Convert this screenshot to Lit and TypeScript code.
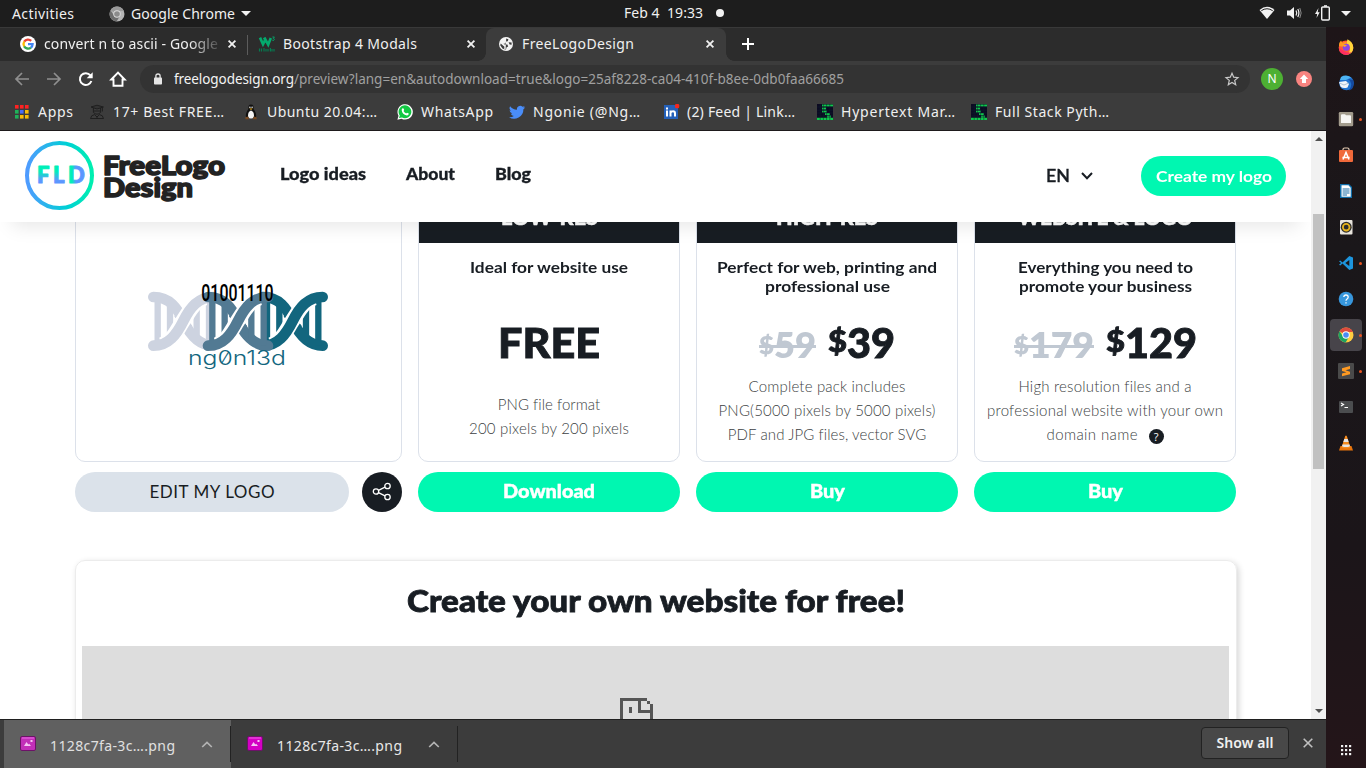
import { LitElement, html, svg, css, nothing } from "lit";
import { customElement, property, query } from "lit/decorators.js";
import { styleMap } from "lit/directives/style-map.js";

/* One line of text that fills the given width, by tracking or by widening its glyphs. */
@customElement("fit-text")
class FitText extends LitElement {
  @property({ type: Number }) w = 0;
  @property() text = "";
  @property({ type: Boolean }) wide = false;
  @query("span") span!: HTMLElement;
  static styles = css`
    :host { display: inline-block; white-space: pre; }
    span { display: inline-block; transform-origin: 0 50%; }
  `;
  updated() {
    const s = this.span;
    s.style.letterSpacing = "0px";
    s.style.transform = "none";
    const natural = s.getBoundingClientRect().width;
    if (this.wide) {
      s.style.transform = `scaleX(${this.w / natural})`;
      s.style.marginRight = this.w - natural + "px";
      return;
    }
    const n = Math.max(1, this.text.length - 1);
    const gap = (this.w - natural) / n;
    s.style.letterSpacing = gap + "px";
    s.style.marginRight = -gap + "px";
  }
  render() {
    return html`<span>${this.text}</span>`;
  }
}

const t = (text: string, w: number, cls = "") =>
  html`<fit-text class=${cls} .text=${text} .w=${w}></fit-text>`;
const wide = (text: string, w: number, cls = "") =>
  html`<fit-text class=${cls} .text=${text} .w=${w} .wide=${true}></fit-text>`;

const icon = (w: number, h: number, body: unknown, vb = `0 0 ${w} ${h}`) =>
  html`<svg class="ic" width=${w} height=${h} viewBox=${vb} fill="none">${body}</svg>`;

const closeX = icon(8, 8, svg`<path d="M.6.6l6.8 6.8M7.4.6L.6 7.4" stroke="#f0f0f0" stroke-width="1.8"/>`);

const chromeBall = (r: string, g: string, y: string, b: string, ring: string) => svg`
  <circle cx="8" cy="8" r="7.5" fill=${y}/>
  <path d="M8 8L1.5 4.25A7.5 7.5 0 0 1 14.5 4.25L15 5H8z" fill=${r}/>
  <path d="M1.5 4.25A7.5 7.5 0 0 0 7.6 15.5L11 9.7 8 8 4.9 9.2z" fill=${g}/>
  <circle cx="8" cy="8" r="3.7" fill=${ring}/><circle cx="8" cy="8" r="2.8" fill=${b}/>`;

const googleG = icon(16, 16, svg`<circle cx="8" cy="8" r="8" fill="#fff"/>
  <g stroke-width="2.3"><path d="M4.2 5.6A4.6 4.6 0 0 1 11.2 4.8" stroke="#ea4335"/>
  <path d="M4.2 10.4A4.7 4.7 0 0 1 4.2 5.6" stroke="#fbbc05"/>
  <path d="M11 11.6A4.7 4.7 0 0 1 4.1 10.3" stroke="#34a853"/>
  <path d="M8 8.2H12.6A4.7 4.7 0 0 1 10.9 11.6" stroke="#4285f4"/></g>`);

const w3 = icon(16, 16, svg`<path d="M1 1.600L4 8.200 6.400 3.600 9.200 8.600 11.800 2M5 1.600L7.600 6" stroke="#04aa6d" stroke-width="2.600"/>
  <path d="M13.400 1H15.400L14.300 2.400Q15.600 2.600 15.200 3.800T13.300 4.200" stroke="#04aa6d" stroke-width=".9"/>
  <path d="M.5 12.500v3M2.500 12.500v3M5 12v3.500M7 13v2.500M9 13v2.500M11.400 12v3.500M13 13v2.500M15 13v2.500" stroke="#067a50" stroke-width="1.200"/>`);

const globe = icon(16, 16, svg`<circle cx="8" cy="8" r="7" fill="#f3f3f3"/>
  <path d="M8.200 2.400L10.400 3.200 9.800 5.200 8 5.600 7.600 7.400 5.400 7.800 6.600 8.600H9.400L10.200 10.400 8.600 11.200 8 13.600 6.200 13 6.400 10.800 2.700 7.600 2.200 9.200 4.400 12.400 7.600 13.800zM10.600 6.200L13.600 6.400 13.600 8.800 11.600 8.400z" fill="#3c3c3c"/>`);

const apps = icon(16, 16, svg`${[["#f22", "#f22", "#f22"], ["#1fb25a", "#4a6cf5", "#fbbc05"], ["#1fb25a", "#fbbc05", "#fbbc05"]].map(
  (row, j) => row.map((c, i) => svg`<rect x=${1 + i * 5} y=${1 + j * 5} width="3.6" height="3.6" fill=${c}/>`))}`);

const graduate = icon(16, 16, svg`<g stroke="#1c1c1c" stroke-width=".9"><path d="M2 3L8 1.200 14.400 3 8 5z" fill="#333"/><path d="M4.400 4v4.400Q8 12 11.600 8.400V4M13.400 3.500v4M1.500 14.500Q2 11 5.500 10.600L8 13l2.500-2.400Q14 11 14.500 14.500zM5 7h6M8 12v2.500"/></g>`);

const tux = icon(16, 16, svg`<path d="M8 .6C5.400.6 5.300 3 5.400 5 4 7 2.800 9 2.800 12 3 15.400 13 15.400 13.200 12 13.200 9 12 7 10.600 5 10.700 3 10.600.6 8 .6z" fill="#111"/>
  <path d="M8 6.500C6 7 5 9 5 11.500Q5 14.600 8 14.600T11 11.500C11 9 10 7 8 6.500z" fill="#f4f4f4"/>
  <circle cx="6.900" cy="3.300" r=".7" fill="#fff"/><circle cx="9.100" cy="3.300" r=".7" fill="#fff"/><path d="M6.400 4.600H9.600L8 6z" fill="#f4b21c"/>
  <path d="M2.400 13.200L5 12.500 6.200 15.300 2.400 15.200zM13.600 13.200L11 12.500 9.800 15.300 13.600 15.200z" fill="#7a4a22"/>`);

const whatsapp = icon(16, 16, svg`<path d="M.4 15.700L1.500 11.800A7.700 7.700 0 1 1 4.500 14.700z" fill="#fff"/>
  <path d="M2 14.100L2.800 11.500A6.400 6.400 0 1 1 5 13.400z" fill="#12c843"/>
  <path d="M5.500 4.200L6.600 4.400 7.200 6 6.500 7Q7.500 8.800 9.200 9.500L10 8.700 11.800 9.500Q11.700 11.500 9.800 11.400 5.300 10.500 4.700 6.200 4.600 4.800 5.500 4.200z" fill="#fff"/>`);

const twitter = icon(16, 16, svg`<path d="M16 3.200a6 6 0 0 1-1.800.5A3.300 3.300 0 0 0 15.600 2a6.500 6.500 0 0 1-2.100.8 3.300 3.300 0 0 0-5.600 3A9.300 9.300 0 0 1 1.100 2.300a3.300 3.300 0 0 0 1 4.400 3 3 0 0 1-1.500-.4 3.300 3.300 0 0 0 2.600 3.200 3.300 3.300 0 0 1-1.500.1 3.300 3.300 0 0 0 3.100 2.300A6.600 6.600 0 0 1 0 13.200 9.300 9.300 0 0 0 14.400 5.300 6.500 6.500 0 0 0 16 3.200z" fill="#4a8df8"/>`);

const linkedin = icon(18, 16, svg`<rect x="1" y="1" width="14" height="14" fill="#2460b8"/>
  <path d="M4 6.500V12.500M4 3.500v2M7.500 12.500V6.500M7.500 9Q8 7.200 10 7.200 12 7.200 12 9.500V12.500" stroke="#fff" stroke-width="2"/>
  <rect x="12" width="4.200" height="4.200" rx="1.200" fill="#f3261f"/>`);

const fsp = icon(16, 16, svg`<rect width="16" height="16" fill="#0c0a22"/>
  <path d="M5 1.500H16M5 4.500H9M5 7.500H10M8 10H13M10 12.500H14M0 14.800H16" stroke="#10c94c" stroke-width="2.200"/>
  <path d="M0 3H16M0 6.200H16M0 9H16M0 12H16M3.200 0V16M6.400 0V16M9.600 0V16M12.800 0V16" stroke="#0c2330" stroke-width=".5"/>`);

const bookmarks = [
  { w: 75, tw: 35, ic: apps, s: "Apps" },
  { w: 154, tw: 111, ic: graduate, s: "17+ Best FREE…" },
  { w: 154, tw: 110, ic: tux, s: "Ubuntu 20.04:…" },
  { w: 112, tw: 72, ic: whatsapp, s: "WhatsApp" },
  { w: 154, tw: 107, ic: twitter, s: "Ngonie (@Ng…" },
  { w: 154, tw: 108, ic: linkedin, s: "(2) Feed | Link…" },
  { w: 154, tw: 114, ic: fsp, s: "Hypertext Mar…" },
  { w: 154, tw: 114, ic: fsp, s: "Full Stack Pyth…" },
];

const dock = [
  { ic: svg`<circle cx="8" cy="8.700" r="7.300" fill="#ff5a36"/><path d="M1 7Q1 3 3 1.500L4.500 4Q6 2.500 8 3L9 6 6 8z" fill="#ff9a1f"/><path d="M9.500.3Q15.500 3.500 15.300 9T9 15.800Q13 12 11.500 8T8.500 4.500z" fill="#ffd53a"/><path d="M1 9Q1.500 16 8.500 16 12 15.500 13.500 13 9 14.500 6 12z" fill="#ff2d62"/><circle cx="8.300" cy="8.300" r="3.500" fill="#8a46e8"/><path d="M3.500 5.500Q7 5 9 6.500L6.500 8z" fill="#ffa42a"/>` },
  { ic: svg`<circle cx="8.500" cy="8" r="7.300" fill="#2273cf"/><path d="M3 2Q8-1 13 2.500L8 5 2 5z" fill="#4db4f5"/><path d="M10 4Q16 8 11 15.500L14 14Q17 9 15 5z" fill="#1449a0"/><path d="M1 7L8 6 11 9 9.500 12.500Q5 14 2.500 11.500z" fill="#f1f4f8"/><path d="M1.500 8L6 10 10.500 8" stroke="#9db4cc" stroke-width=".8"/>` },
  { dot: 1, ic: svg`<rect x=".8" y="1" width="14.400" height="14.200" rx="1.300" fill="#a39c8d"/><path d="M3 4.300Q3 3.300 4 3.300H7L8 4.300H12Q13 4.300 13 5.300V12H3z" fill="#f7f6f3"/>` },
  { ic: svg`<path d="M5 4V2.500Q5 1 6.500 1H9.500Q11 1 11 2.500V4" stroke="#e6cdb6" stroke-width="1.200"/><rect x="1" y="3" width="14" height="12" rx="1" fill="#f0693a"/><path d="M5 12.500L8 5.500 11 12.500M4.400 10.500H11.600" stroke="#fff" stroke-width="1.500"/>` },
  { ic: svg`<path d="M2 1H11L14 4V15H2z" fill="#0f6ca8"/><path d="M3.500 2.300H10.500L12.700 4.700V13.700H3.500z" fill="#fff"/><path d="M4.600 6H11.500M4.600 8H11.500M4.600 10H11.500M4.600 12H9" stroke="#1a6ea8" stroke-width="1"/>` },
  { ic: svg`<rect x="2" y="1" width="12.500" height="14.500" rx="1" fill="#e8e4dc"/><circle cx="8.200" cy="8.200" r="5.500" fill="#2d2d2d"/><circle cx="8.200" cy="8.200" r="3.300" stroke="#e8b41c" stroke-width="1.800"/>` },
  { dot: 1, ic: svg`<path d="M11.300 1L15 2.600V13.400L11.300 15 4.500 8.600 2.300 10.500 1 9.700 3 8 1 6.300 2.300 5.500 4.500 7.400zM11.300 5L7.300 8 11.300 11z" fill="#1d95dd" fill-rule="evenodd"/>` },
  { ic: svg`<circle cx="8" cy="8" r="7.300" fill="#3796dc"/><path d="M5.800 6Q6 4 8 4T10.200 6Q10.200 7.300 8.800 8.200 8 8.800 8 9.800M8 11.200V12.500" stroke="#fff" stroke-width="1.300"/>` },
  { dot: 1, active: 1, ic: chromeBall("#dd4b3e", "#1da362", "#ffcd40", "#4a8bf5", "#fff") },
  { dot: 1, ic: svg`<rect width="16" height="16" rx="1" fill="#4a4a4a"/><path d="M4 5.300L12 3V6L7.500 7.300 12 8.700V11.300L4 13.300V10.500L8.500 9.300 4 8z" fill="#ff9a22"/>` },
  { ic: svg`<rect x="1" y="2" width="14" height="12" rx="1" fill="#4b4d4f"/><path d="M3 4L5.500 5.500 3 7M6.500 8.500H10" stroke="#fff" stroke-width="1.200"/>` },
  { ic: svg`<path d="M2.500 11H13.500L15 15.500H1z" fill="#e8740c"/><path d="M7.300.8H8.700L12.500 12.500Q8 14.500 3.500 12.500z" fill="#f58a1e"/><path d="M6.300 4H9.700L10.700 7H5.300zM4.500 9.500H11.500L12 11.200Q8 13 4 11.200z" fill="#e6e6e6"/>` },
];

const plans = [
  { head: ["LOW-RES", 97], sub: [["Ideal for website use", 158]], cta: ["Download", 92],
    desc: [["PNG file format", 102], ["200 pixels by 200 pixels", 160]] },
  { head: ["HIGH-RES", 102], sub: [["Perfect for web, printing and", 220], ["professional use", 125]], cta: ["Buy", 35],
    old: ["59", 42], now: ["39", 48],
    desc: [["Complete pack includes", 157], ["PNG(5000 pixels by 5000 pixels)", 217], ["PDF and JPG files, vector SVG", 198]] },
  { head: ["WEBSITE & LOGO", 175], sub: [["Everything you need to", 175], ["promote your business", 173]], cta: ["Buy", 35],
    old: ["179", 65], now: ["129", 72], help: true,
    desc: [["High resolution files and a", 173], ["professional website with your own", 236], ["domain name", 91]] },
] as any[];

/* Strand pair: the rear strand and rungs are cut back around the front one. */
const helix = (x: number, color: string, id: string) => svg`
  <g transform="translate(${x} 65)">
    <mask id=${id} maskUnits="userSpaceOnUse" x="-20" y="-20" width="260" height="220">
      <rect x="-20" y="-20" width="260" height="220" fill="#fff"/>
      <path d="M40 160C75 150 88 112 106 86S140 26 172 18" stroke="#000" stroke-width="46"/>
    </mask>
    <g mask="url(#${id})" stroke=${color}>
      <path d="M16 16C66 16 88 50 106 88S150 162 196 162" stroke-width="32" stroke-linecap="round"/>
      <path d="M29 16V162M183 16V162" stroke-width="19"/>
      <path d="M66 34V150M146 30V145" stroke-width="19"/>
      <path d="M84 70L100 88M112 90L128 108" stroke-width="14"/>
    </g>
    <path d="M16 162C62 162 86 128 106 88S150 16 196 16" stroke=${color} stroke-width="32" stroke-linecap="round"/>
  </g>`;

const upCaret = icon(12, 7, svg`<path d="M1.200 6L6 1.500 10.800 6" stroke="#b4b4b4" stroke-width="1.700"/>`);
const picture = (fill: string) => icon(16, 15, svg`<rect x=".5" y=".5" width="15" height="14" rx="1.500" fill=${fill} stroke="#6d1268"/><path d="M2 2H14" stroke="#f57af0" stroke-width=".8"/><path d="M4 10L6.500 6 8.300 8.500 9.200 7.700 11 10zM10.500 4h2v2h-2z" fill="#f5c3f2"/>`);

@customElement("app-root")
class AppRoot extends LitElement {
  static styles = css`
    :host { display: flex; flex-direction: column; width: 1366px; height: 768px; overflow: hidden; font: 15px/20px "Noto Sans", "Open Sans", sans-serif; color: #f0f0f0; background: #1d1d1d; }
    * { box-sizing: border-box; }
    .ic { display: block; flex: none; overflow: visible; }
    .top { display: grid; grid-template-columns: 1fr auto 1fr; height: 27px; flex: none; align-items: center; font-size: 14px; line-height: 26px; }
    .top-l { display: flex; align-items: center; padding-left: 12px; }
    .app { display: flex; align-items: center; gap: 6px; margin-left: 35px; }
    .top-c { display: flex; align-items: center; gap: 13px; margin-right: 18px; padding-bottom: 1px; }
    .top-r { display: flex; align-items: center; justify-content: flex-end; gap: 12px; padding: 0 15px 1px 0; }
    .top-r .ic:nth-child(-n+3) { margin-right: -1px; margin-left: 1px; }
    .main { display: flex; flex: 1; min-height: 0; }
    .win { width: 1326px; display: flex; flex-direction: column; }
    .tabs { height: 34px; flex: none; background: #2c2c2c; border-top: 1px solid #393939; display: flex; font-size: 14px; }
    .tab { display: flex; align-items: center; height: 33px; gap: 8px; }
    .t1 { width: 247px; padding: 0 11px 1px 20px; }
    .t2 { width: 238px; padding: 0 11px 1px; }
    .t3 { width: 240px; padding: 0 12px 1px; background: #3c3c3c; border-radius: 8px 8px 0 0; position: relative; }
    .t3::before, .t3::after { content: ""; position: absolute; bottom: 0; width: 8px; height: 8px; }
    .t3::before { left: -8px; background: radial-gradient(circle at 0 0, transparent 7.500px, #3c3c3c 8px); }
    .t3::after { right: -8px; background: radial-gradient(circle at 100% 0, transparent 7.500px, #3c3c3c 8px); }
    .title { flex: 1; overflow: hidden; }
    .fade { -webkit-mask-image: linear-gradient(90deg, #000 145px, transparent 180px); mask-image: linear-gradient(90deg, #000 145px, transparent 180px); }
    .sep { width: 1px; height: 20px; background: #5c5c5c; align-self: center; }
    .plus { margin: 10px 0 0 16px; }
    .bar { height: 35px; flex: none; background: #3c3c3c; display: flex; align-items: center; padding: 0 0 0 14px; gap: 16px; }
    .omni { width: 1110px; height: 28px; margin-left: -2px; border-radius: 14px; background: #333; display: flex; align-items: center; padding: 0 11px 0 14px; color: #a0a0a0; font-size: 13.500px; }
    .omni .lock { margin-right: 12px; }
    .omni .host { color: #f4f4f4; }
    .omni .star { margin-left: auto; }
    .me { width: 22px; height: 22px; border-radius: 50%; background: #4db033; font: 12px/22px "Noto Sans", sans-serif; text-align: center; color: #fff; margin-left: -5px; }
    .bar .me + .ic { margin-left: -3px; }
    .marks { height: 34px; flex: none; background: #3c3c3c; display: flex; padding-left: 14px; font-size: 14px; padding-bottom: 2px; }
    .mark { display: flex; align-items: center; gap: 8px; }
    .mark .cell { width: 16px; flex: none; }
    .view { flex: 1; min-height: 0; border-top: 1px solid #1e1a1c; display: flex; }
    .page { width: 1311px; background: #fff; overflow: hidden; font-family: Lato, sans-serif; color: #181d23; }
    .head { height: 91px; background: #fff; position: relative; z-index: 1; box-shadow: 0 16px 18px -12px rgba(0,0,0,.1); display: flex; align-items: center; padding: 0 25px 4px 23px; }
    .brand { width: 257px; flex: none; height: 87px; }
    .nav { display: flex; gap: 40px; font-weight: 900; font-size: 16px; flex: 1; padding-bottom: 1px; -webkit-text-stroke: .3px currentColor; }
    .lang { display: flex; align-items: center; gap: 11px; font-size: 17px; font-weight: 600; margin-right: 48px; padding-top: 3px; -webkit-text-stroke: .3px currentColor; }
    .create { width: 145px; height: 40px; border-radius: 20px; background: #00f7b1; color: #fff; font-weight: 700; font-size: 16px; line-height: 40px; text-align: center; margin-top: 2px; }
    .cards { display: flex; gap: 16px; padding-left: 75px; margin-top: -32px; }
    .col { width: 262px; }
    .col.first { width: 327px; }
    .card { height: 272px; border: 1px solid #dce1ea; border-radius: 10px; overflow: hidden; text-align: center; }
    .band { height: 52px; background: #181d23; color: #fff; font: 900 21px/52px Lato, sans-serif; -webkit-text-stroke: .5px currentColor; }
    .sub { height: 63px; padding-top: 14px; font-weight: 700; font-size: 16px; line-height: 19px; display: flex; flex-direction: column; align-items: center; }
    .price { height: 68px; display: flex; justify-content: center; align-items: baseline; font-weight: 900; font-size: 41px; line-height: 74px; -webkit-text-stroke: .9px currentColor; }
    .price .was { display: flex; align-items: baseline; color: #c0c8d2; font-size: 36px; font-weight: 800; margin-right: 12px; line-height: 74px; position: relative; -webkit-text-stroke: 0; }
    .price .was::after { content: ""; position: absolute; left: 0; right: 0; top: 38px; height: 3px; background: #c0c8d2; }
    .price .d1 { font-size: 25px; transform: translateY(-4px); line-height: 30px; }
    .price .d2 { font-size: 30px; transform: translateY(-6px); line-height: 30px; }
    .desc { display: flex; flex-direction: column; align-items: center; font-weight: 300; font-size: 15px; line-height: 24px; color: #3c3f43; padding-top: 0; }
    .desc.low { padding-top: 18px; }
    .row { display: flex; align-items: center; gap: 11px; height: 24px; }
    .q { width: 15px; height: 15px; border-radius: 50%; background: #181d23; color: #fff; font: 11px/15px "Open Sans", sans-serif; margin-top: 4px; text-align: center; }
    .btn { height: 40px; border-radius: 20px; background: #00f7b1; color: #fff; text-align: center; font-weight: 900; font-size: 18px; line-height: 39px; margin-top: 10px; -webkit-text-stroke: .4px currentColor; }
    .edit { display: flex; margin-top: 10px; gap: 13px; }
    .edit-b { width: 274px; height: 40px; border-radius: 20px; background: #dbe2ea; text-align: center; font-size: 17px; line-height: 40px; }
    .share { width: 40px; height: 40px; border-radius: 50%; background: #181d23; display: grid; place-items: center; }
    .art { padding: 79px 0 0 44px; }
    .promo { width: 1162px; height: 260px; margin: 48px 0 0 75px; border: 1px solid #ececec; border-radius: 10px; box-shadow: 2px 2px 6px rgba(0,0,0,.16); padding: 0 7px 0 6px; text-align: center; }
    .promo h2 { margin: 0; height: 85px; font: 900 30px/79px Lato, sans-serif; -webkit-text-stroke: .8px currentColor; }
    .frame { height: 170px; background: #ddd; padding: 52px 0 0 538px; }
    .scroll { width: 15px; background: #f1f1f1; display: flex; flex-direction: column; align-items: center; padding: 6px 0 6px; }
    .thumb { width: 11px; height: 255px; background: #c1c1c1; margin-top: 73px; margin-bottom: auto; }
    .shelf { height: 49px; flex: none; border-top: 1px solid #1f1f1f; background: #3c3c3c; display: flex; align-items: center; padding-left: 4px; font-size: 14px; }
    .dl { height: 48px; width: 227px; display: flex; align-items: center; padding-left: 16px; color: #e8e8e8; position: relative; }
    .dl > .ic:first-child { margin-bottom: 2px; }
    .dl::after { content: ""; position: absolute; right: 0; top: 6px; width: 1px; height: 36px; background: #222; }
    .dl.on { background: #606060; color: #e0e0e0; }
    .dl fit-text { margin: 4px 26px 0 14px; }
    .all { margin-left: auto; width: 88px; height: 32px; border: 1px solid #222; border-radius: 4px; background: #484848; font: 600 14px/30px "Noto Sans", sans-serif; text-align: center; margin-right: 14px; margin-bottom: 2px; }
    .shelf-x { margin: 0 13px 2px 0; }
    .dock { width: 40px; background: linear-gradient(180deg, #1e1518, #1a171a 30%, #1b1519 70%, #241519); display: flex; flex-direction: column; padding-top: 4px; }
    .slot { width: 32px; height: 32px; margin: 0 4px 4px; border-radius: 4px; display: grid; place-items: center; position: relative; }
    .slot.active { background: #47444a; }
    .dot { position: absolute; right: 0; top: 15px; width: 3px; height: 3px; border-radius: 50%; background: #e95420; }
    .grid { margin: auto 0 12px 15px; }
  `;

  renderTop() {
    return html`<div class="top">
      <div class="top-l">${t("Activities", 62)}
        <div class="app">${icon(16, 16, chromeBall("#9a9a9a", "#6d6d6d", "#b5b5b5", "#8b8b8b", "#dcdcdc"))}${t("Google Chrome", 104)}
          ${icon(10, 5, svg`<path d="M0 0H10L5 5z" fill="#f2f2f2"/>`)}</div></div>
      <div class="top-c">${t("Feb 4  19:33", 79)}${icon(8, 8, svg`<circle cx="4" cy="4" r="4" fill="#f2f2f2"/>`)}</div>
      <div class="top-r">
        ${icon(16, 14, svg`<path d="M.5 4Q8-2.500 15.500 4L8 13z" fill="#f2f2f2"/><path d="M2.300 4.700Q8 .8 13.700 4.700" stroke="#1d1d1d" stroke-width="1"/>`)}
        ${icon(16, 14, svg`<path d="M0 4.500H3L7 1V13L3 9.500H0z" fill="#f2f2f2"/><path d="M9 4.500Q10.500 7 9 9.500M10.800 3Q13 7 10.800 11" stroke="#f2f2f2" stroke-width="1.200"/><path d="M12.800 2Q15.500 7 12.800 12" stroke="#8a8a8a" stroke-width="1"/>`)}
        ${icon(15, 16, svg`<path d="M3.500 3L0 9H2.200L1.500 13 4.700 7.300H2.700z" fill="#f2f2f2"/><rect x="6.700" y="2" width="7.600" height="13" rx="1" stroke="#f2f2f2" stroke-width="1.400"/><path d="M9 1H12" stroke="#f2f2f2" stroke-width="1.600"/>`)}
        ${icon(10, 5, svg`<path d="M0 0H10L5 5z" fill="#f2f2f2"/>`)}
      </div></div>`;
  }

  renderChrome() {
    return html`
      <div class="tabs">
        <div class="tab t1">${googleG}<div class="title fade">${t("convert n to ascii - Google", 174)}</div>${closeX}</div>
        <div class="sep"></div>
        <div class="tab t2">${w3}<div class="title">${t("Bootstrap 4 Modals", 134)}</div>${closeX}</div>
        <div class="tab t3">${globe}<div class="title">${t("FreeLogoDesign", 112)}</div>${closeX}</div>
        <div class="plus">${icon(12, 12, svg`<path d="M6 0V12M0 6H12" stroke="#fff" stroke-width="2"/>`)}</div>
      </div>
      <div class="bar">
        ${icon(16, 16, svg`<path d="M15 8H2M8 2L2 8 8 14" stroke="#8f8f8f" stroke-width="1.700"/>`)}
        ${icon(16, 16, svg`<path d="M1 8H14M8 2L14 8 8 14" stroke="#8f8f8f" stroke-width="1.700"/>`)}
        ${icon(16, 16, svg`<path d="M13.400 10A5.900 5.900 0 1 1 12.400 4.300" stroke="#fff" stroke-width="2"/><path d="M14.700 1.200V7.200H8.700z" fill="#fff"/>`)}
        ${icon(16, 16, svg`<path d="M1.300 8.500L8 1.700 14.700 8.500H12.500V14.700H3.500V8.500z" stroke="#fff" stroke-width="1.900"/>`)}
        <div class="omni">
          <div class="lock">${icon(8, 12, svg`<rect y="4.500" width="8" height="7" rx=".8" fill="#e6e6e6"/><path d="M1.900 5V3Q1.900 1 4 1T6.100 3V5" stroke="#e6e6e6" stroke-width="1.300"/>`)}</div>
          ${t("freelogodesign.org", 120, "host")}${t("/preview?lang=en&autodownload=true&logo=25af8228-ca04-410f-b8ee-0db0faa66685", 550)}
          <div class="star">${icon(14, 14, svg`<path d="M7 1.200L8.700 5.200 13 5.600 9.700 8.400 10.700 12.700 7 10.400 3.300 12.700 4.300 8.400 1 5.600 5.300 5.200z" stroke="#c9c9c9" stroke-width="1.200"/>`)}</div>
        </div>
        <div class="me">N</div>
        ${icon(16, 16, svg`<circle cx="8" cy="8" r="8" fill="#f98480"/><path d="M8 3.500L12.200 8H10V12H6V8H3.800z" fill="#fff"/>`)}
      </div>
      <div class="marks">${bookmarks.map((b) => html`<div class="mark" style=${styleMap({ width: b.w + "px" })}><div class="cell">${b.ic}</div>${t(b.s, b.tw)}</div>`)}</div>`;
  }

  renderPlan(p: any) {
    return html`<div class="col">
      <div class="card">
        <div class="band">${wide(p.head[0], p.head[1])}</div>
        <div class="sub">${p.sub.map((l: any) => wide(l[0], l[1]))}</div>
        <div class="price">${p.now
          ? html`<span class="was">${wide("$", 15, "d1")}${wide(p.old[0], p.old[1])}</span>${wide("$", 19, "d2")}${wide(p.now[0], p.now[1])}`
          : wide("FREE", 102)}</div>
        <div class="desc ${p.now ? "" : "low"}">${p.desc.map((l: any, i: number) =>
          html`<div class="row">${t(l[0], l[1])}${p.help && i === 2 ? html`<span class="q">?</span>` : nothing}</div>`)}</div>
      </div>
      <div class="btn">${wide(p.cta[0], p.cta[1])}</div>
    </div>`;
  }

  renderPage() {
    return html`<div class="page">
      <div class="head">
        <svg class="brand" viewBox="23 131 257 87" fill="none">
          <defs>
            <linearGradient id="ring"><stop offset="0" stop-color="#4f9bff"/><stop offset=".6" stop-color="#00cfd6"/><stop offset="1" stop-color="#00efb0"/></linearGradient>
            <linearGradient id="ltr" gradientUnits="userSpaceOnUse" x1="0" y1="166" x2="0" y2="184"><stop offset=".3" stop-color="#00efb8"/><stop offset=".8" stop-color="#5b97ff"/></linearGradient>
            <linearGradient id="ltr2" gradientUnits="userSpaceOnUse" x1="70" y1="0" x2="80" y2="0"><stop offset=".2" stop-color="#00efb8"/><stop offset=".6" stop-color="#5b97ff"/></linearGradient>
          </defs>
          <circle cx="59.500" cy="175.500" r="32.500" stroke="url(#ring)" stroke-width="4"/>
          <g font-family="Lato, sans-serif" font-weight="900" font-size="22" stroke-width="1" stroke-linejoin="round">
            <text x="37" y="183" fill="url(#ltr)" stroke="url(#ltr)">F</text><text x="53" y="183" fill="url(#ltr)" stroke="url(#ltr)">L</text><text x="68" y="183" fill="url(#ltr2)" stroke="url(#ltr2)">D</text>
          </g>
          <g font-family="Lato, sans-serif" font-weight="900" font-size="26" fill="#222" stroke="#222" stroke-width="1.500" stroke-linejoin="round">
            <text x="103" y="174.500" textLength="122" lengthAdjust="spacingAndGlyphs">FreeLogo</text>
            <text x="103" y="197" textLength="90" lengthAdjust="spacingAndGlyphs">Design</text>
          </g>
        </svg>
        <div class="nav">${wide("Logo ideas", 86)}${wide("About", 49)}${wide("Blog", 36)}</div>
        <div class="lang">${wide("EN", 24)}${icon(12, 8, svg`<path d="M1 1L6 6.200 11 1" stroke="#181d23" stroke-width="2"/>`)}</div>
        <div class="create">${wide("Create my logo", 116)}</div>
      </div>
      <div class="cards">
        <div class="col first">
          <div class="card"><div class="art">
            <svg class="ic" width="240" height="110" viewBox="0 0 720 330" fill="none">
              ${helix(84, "#cdd3e0", "m1")}${helix(412, "#12667e", "m3")}${helix(248, "#527a93", "m2")}
              <text x="244" y="94" font-family="Roboto, sans-serif" font-weight="500" font-size="69" fill="#000" textLength="217" lengthAdjust="spacingAndGlyphs">01001110</text>
              <text x="204" y="286" font-family="Inter, sans-serif" font-weight="300" font-size="60" fill="#12667e" style="font-feature-settings:'zero'" textLength="294" lengthAdjust="spacingAndGlyphs">ng0n13d</text>
            </svg></div></div>
          <div class="edit"><div class="edit-b">${t("EDIT MY LOGO", 125)}</div>
            <div class="share">${icon(20, 20, svg`<g stroke="#fff" stroke-width="1.300"><circle cx="4" cy="9.500" r="2.700"/><circle cx="15.500" cy="4" r="2.700"/><circle cx="15.500" cy="15" r="2.700"/><path d="M6.500 8.400L13 5.100M6.500 10.600L13 13.900"/></g>`)}</div></div>
        </div>
        ${plans.map((p) => this.renderPlan(p))}
      </div>
      <div class="promo"><h2>${wide("Create your own website for free!", 498)}</h2>
        <div class="frame">${icon(33, 44, svg`<path d="M0 0H27V3H30V6H33V44H0zM3 3V41H30V15H18V3zM21 3V12H30V6H27V3z" fill="#555" fill-rule="evenodd"/><path d="M9 9H12V15H9z" fill="#555"/>`)}</div></div>
    </div>`;
  }

  renderShelf() {
    return html`<div class="shelf">
      <div class="dl on">${picture("#c22fb8")}${t("1128c7fa-3c….png", 125)}${upCaret}</div>
      <div class="dl">${picture("#d400c4")}${t("1128c7fa-3c….png", 125)}${upCaret}</div>
      <div class="all">${t("Show all", 57)}</div>
      <div class="shelf-x">${icon(10, 10, svg`<path d="M.7.7L9.300 9.300M9.300.7L.7 9.300" stroke="#c0c0c0" stroke-width="1.600"/>`)}</div>
    </div>`;
  }

  render() {
    return html`${this.renderTop()}
      <div class="main">
        <div class="win">
          ${this.renderChrome()}
          <div class="view">${this.renderPage()}
            <div class="scroll">${icon(8, 4, svg`<path d="M0 4H8L4 0z" fill="#505050"/>`)}<div class="thumb"></div>${icon(8, 4, svg`<path d="M0 0H8L4 4z" fill="#505050"/>`)}</div>
          </div>
          ${this.renderShelf()}
        </div>
        <div class="dock">
          ${dock.map((d: any) => html`<div class="slot ${d.active ? "active" : ""}">${icon(16, 16, d.ic)}${d.dot ? html`<i class="dot"></i>` : nothing}</div>`)}
          <div class="grid">${icon(11, 11, svg`${[0, 4, 8].map((y) => [0, 4, 8].map((x) => svg`<rect x=${x} y=${y} width="2.200" height="2.200" fill="#f0f0f0"/>`))}`)}</div>
        </div>
      </div>`;
  }
}
